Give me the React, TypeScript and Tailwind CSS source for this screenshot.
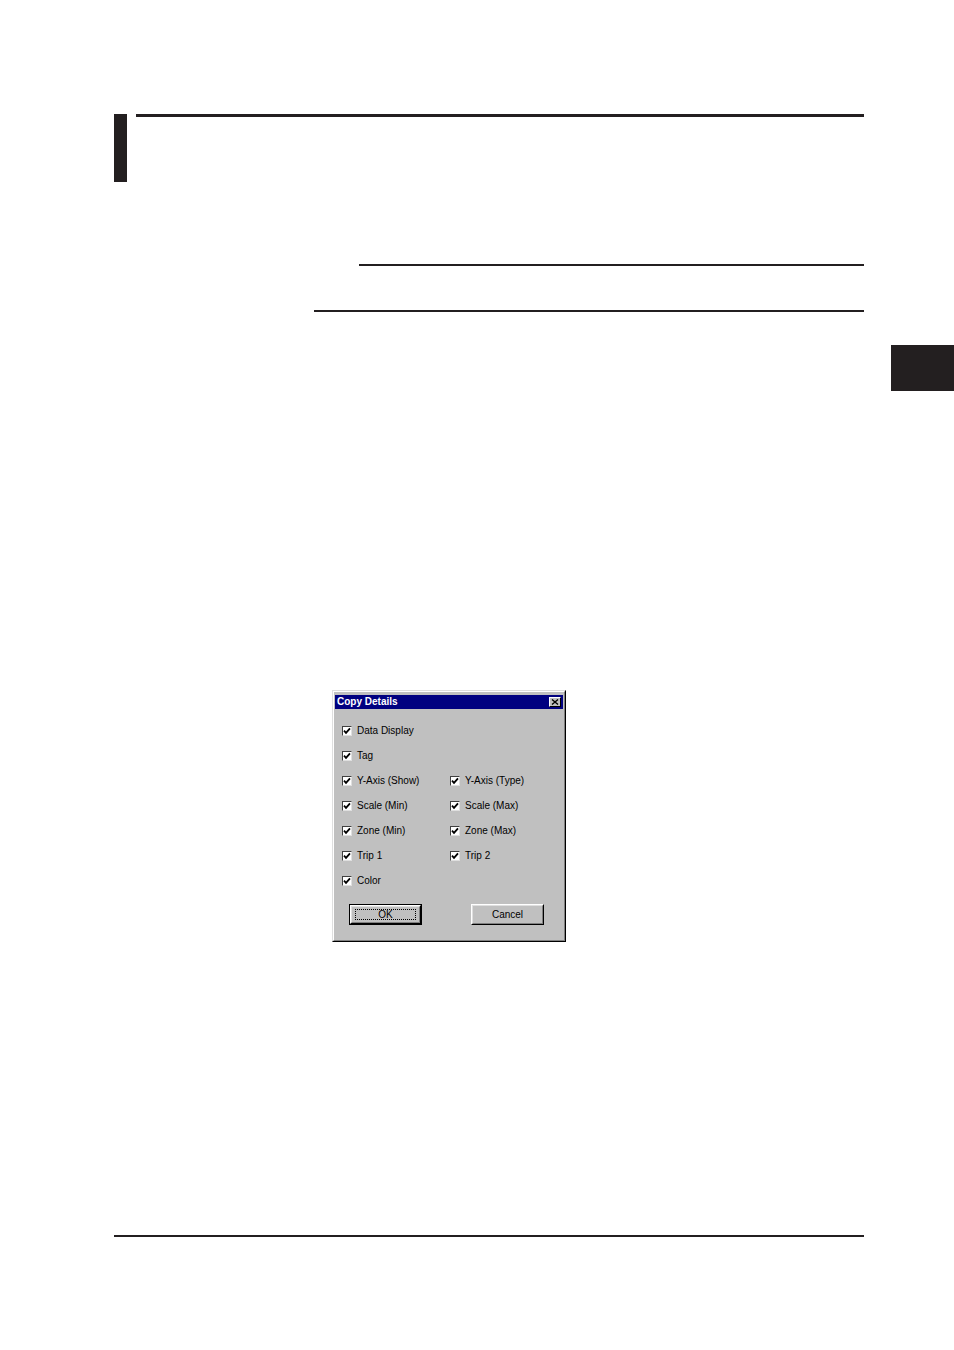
import React from 'react';

const ink = 'bg-[#231f20]';

const Check: React.FC<{ label: string }> = ({ label }) => (
  <div className="flex items-center gap-[5px] h-[25px]">
    <span className="w-[10px] h-[10px] bg-white border border-t-[#404040] border-l-[#404040] border-r-[#dfdfdf] border-b-[#dfdfdf] flex items-center justify-center">
      <svg width="8" height="8" viewBox="0 0 8 8">
        <path d="M1 3.6 L3 5.8 L7 1.3" fill="none" stroke="#000" strokeWidth="1.8" />
      </svg>
    </span>
    <span className="text-[10px] leading-none text-black">{label}</span>
  </div>
);

const Button: React.FC<{ label: string; isDefault?: boolean }> = ({ label, isDefault }) => (
  <div className={`w-[73px] h-[21px] ${isDefault ? 'border border-black' : ''}`}>
    <div className="w-full h-full border border-t-white border-l-white border-r-black border-b-black">
      <div className="w-full h-full border border-t-[#dfdfdf] border-l-[#dfdfdf] border-r-[#808080] border-b-[#808080] flex items-center justify-center">
        {isDefault ? (
          <div className="w-[61px] h-[11px] border border-dotted border-black flex items-center justify-center text-[10px] leading-none text-black">
            {label}
          </div>
        ) : (
          <span className="text-[10px] leading-none text-black">{label}</span>
        )}
      </div>
    </div>
  </div>
);

const CopyDetailsDialog: React.FC = () => {
  const rows: [string, string | null][] = [
    ['Data Display', null],
    ['Tag', null],
    ['Y-Axis (Show)', 'Y-Axis (Type)'],
    ['Scale (Min)', 'Scale (Max)'],
    ['Zone (Min)', 'Zone (Max)'],
    ['Trip 1', 'Trip 2'],
    ['Color', null],
  ];
  return (
    <div className="w-[234px] h-[252px] bg-[#c0c0c0] border border-t-[#dfdfdf] border-l-[#dfdfdf] border-r-black border-b-black">
      <div className="w-full h-full border border-t-white border-l-white border-r-[#808080] border-b-[#808080] px-[1px] pt-[3px]">
        <div className="h-[14px] bg-[#000080] flex items-center justify-between pl-[2px] pr-[2px]">
          <span className="text-[10px] font-bold text-white leading-none">Copy Details</span>
          <div className="w-[12px] h-[10px] bg-[#c0c0c0] border border-t-white border-l-white border-r-black border-b-black flex items-center justify-center">
            <svg width="8" height="6" viewBox="0 0 8 6">
              <path d="M1 0.5 L7 5.5 M7 0.5 L1 5.5" stroke="#000" strokeWidth="1.4" />
            </svg>
          </div>
        </div>
        <div className="pl-[7px] pt-[9px]">
          {rows.map(([a, b]) => (
            <div key={a} className="grid grid-cols-[108px_1fr]">
              <Check label={a} />
              {b ? <Check label={b} /> : <div />}
            </div>
          ))}
        </div>
        <div className="flex pl-[14px] pt-[11px] gap-[49px]">
          <Button label="OK" isDefault />
          <Button label="Cancel" />
        </div>
      </div>
    </div>
  );
};

export default function App() {
  return (
    <div className="w-[954px] h-[1350px] bg-white overflow-hidden" style={{ fontFamily: '"Liberation Sans", Arial, sans-serif' }}>
      <div className="pt-[114px] flex items-start">
        <div className={`ml-[114px] w-[13px] h-[68px] ${ink}`} />
        <div className={`ml-[9px] w-[728px] h-[3px] ${ink}`} />
      </div>
      <div className={`mt-[82px] ml-[359px] w-[505px] h-[2px] ${ink}`} />
      <div className={`mt-[44px] ml-[314px] w-[550px] h-[2px] ${ink}`} />
      <div className={`mt-[33px] ml-[891px] w-[63px] h-[46px] ${ink}`} />
      <div className="mt-[299px] ml-[332px]">
        <CopyDetailsDialog />
      </div>
      <div className={`mt-[293px] ml-[114px] w-[750px] h-[1.5px] ${ink}`} />
    </div>
  );
}
